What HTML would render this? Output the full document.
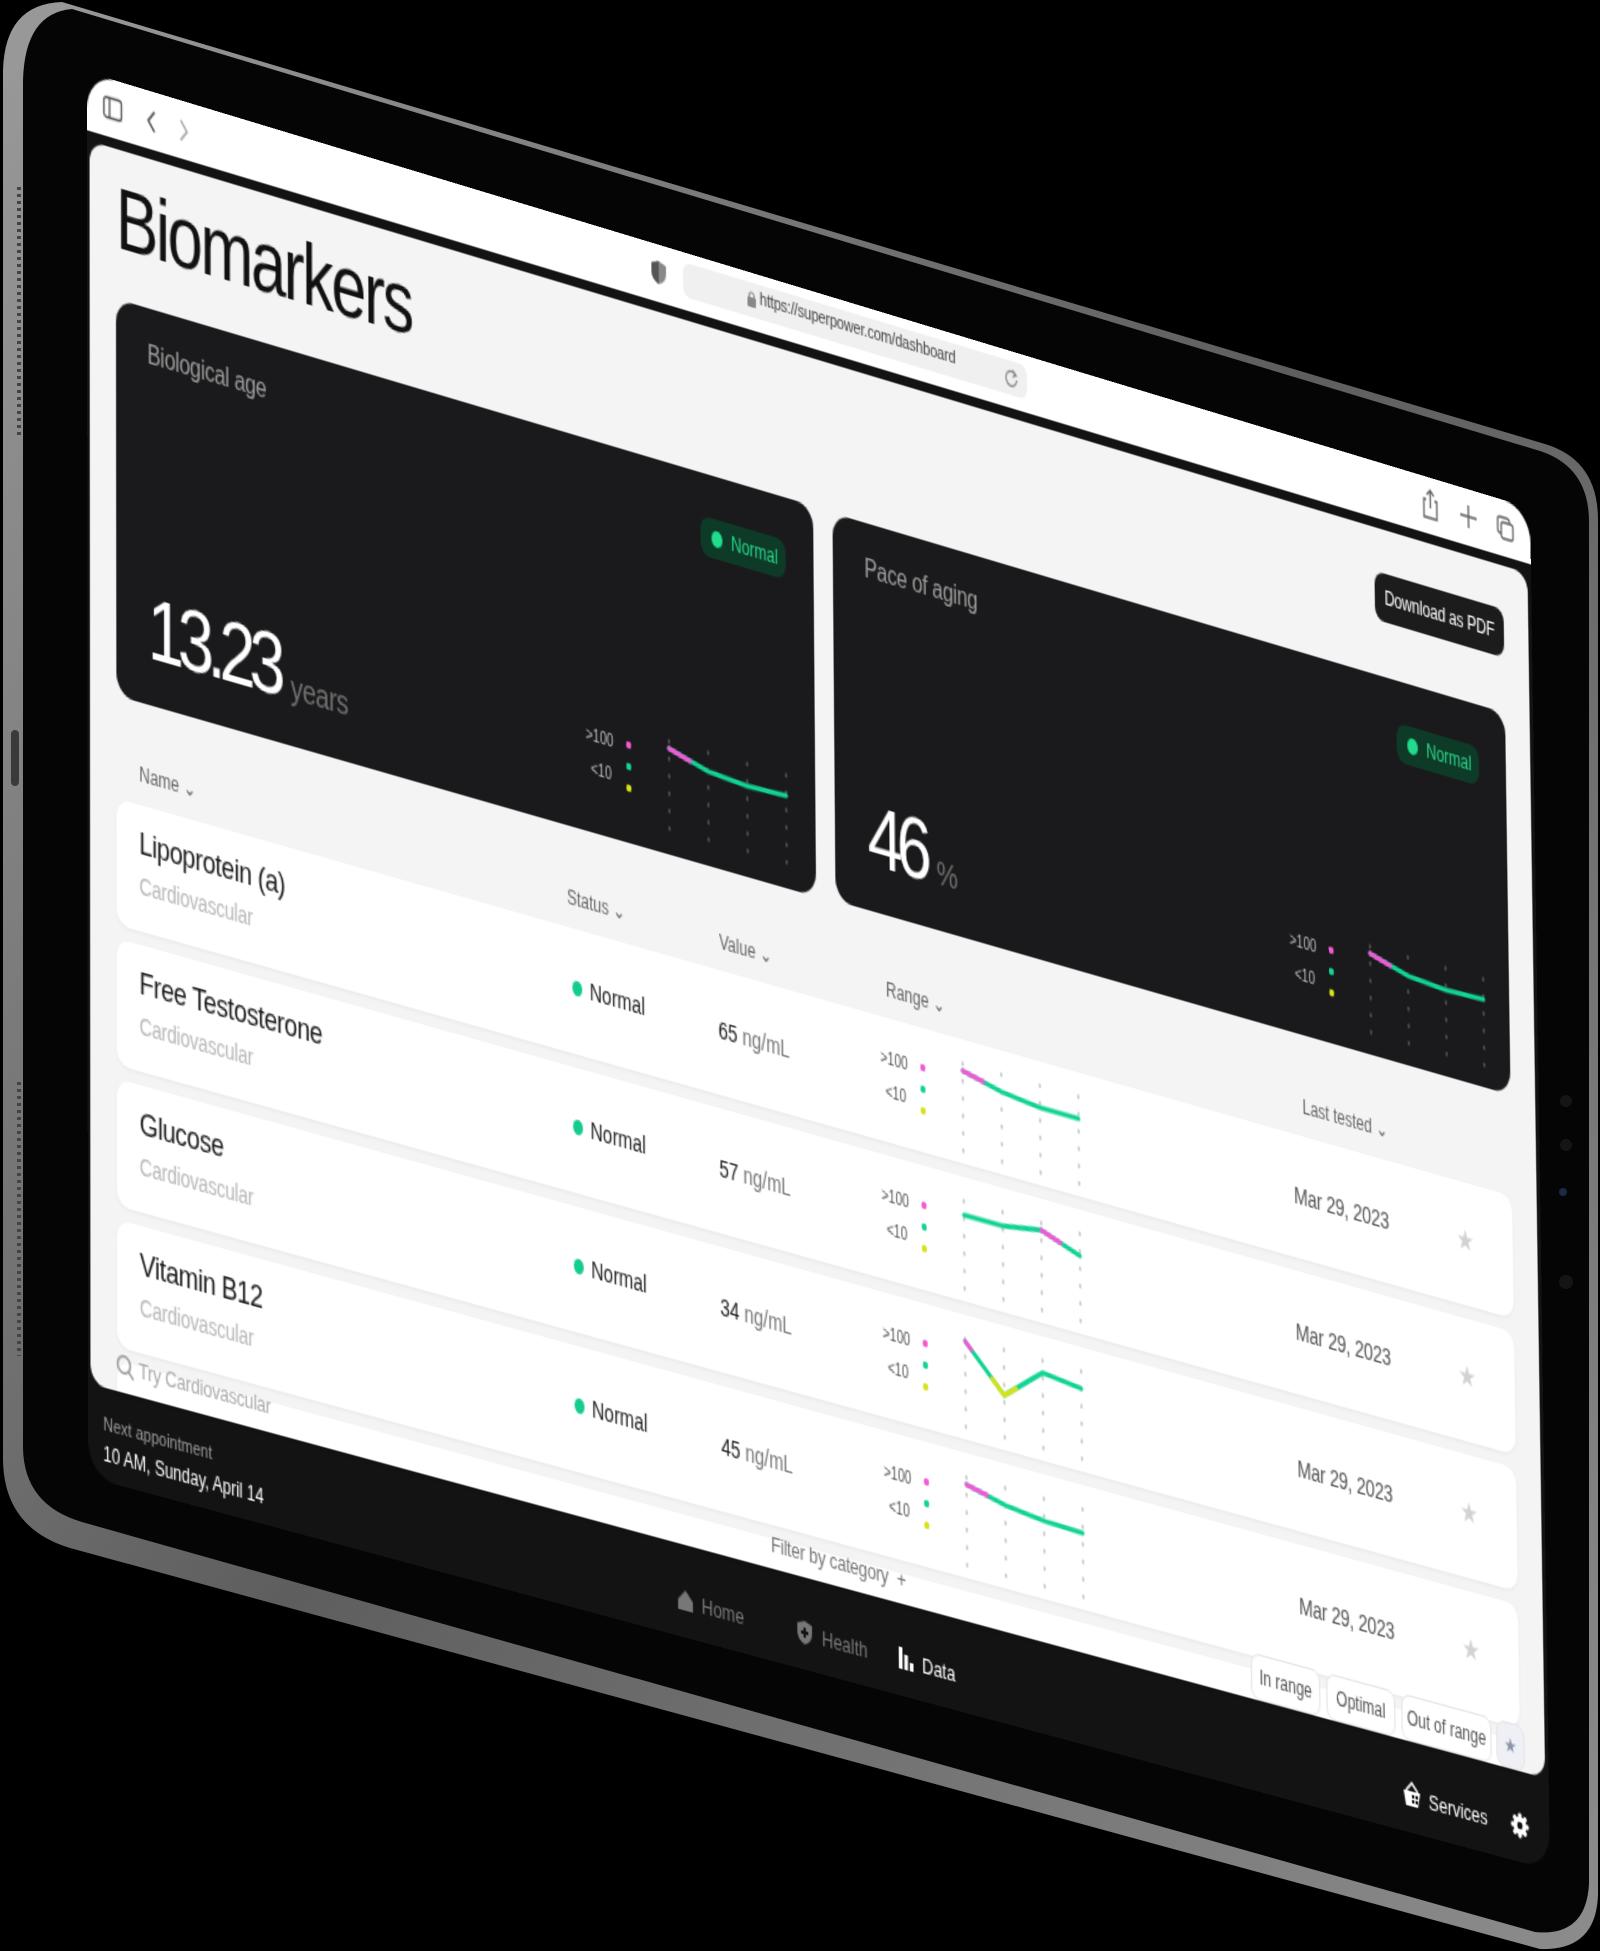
<!DOCTYPE html>
<html><head><meta charset="utf-8">
<style>
html,body{margin:0;padding:0;background:#000;width:1600px;height:1951px;overflow:hidden;font-family:"Liberation Sans",Arial,sans-serif}
#scr{position:absolute;left:0;top:0;width:1194px;height:834px;transform-origin:0 0;
transform:matrix3d(1.25399,0.380243,0,0.0000296993,-0.000223,1.66078,0,-0.0000161643,0,0,1,0,87,72,0,1);
border-radius:22px;background:#131313;overflow:hidden}
.a{position:absolute;white-space:nowrap}
.card{position:absolute;background:#1a1a1c;border-radius:14px}
.lbl{position:absolute;font-size:16px;color:#9c9c9c;letter-spacing:-0.3px}
.big{position:absolute;font-size:52px;line-height:52px;color:#fff;letter-spacing:-5px}
.big span{font-size:20px;color:#707070;letter-spacing:-0.5px;margin-left:9px}
.badge{position:absolute;width:70px;height:24px;border-radius:8px;background:#0d3b28;color:#2ad68a;font-size:12px;line-height:24px}
.badge i{position:absolute;left:9px;top:7px;width:9px;height:10px;border-radius:50%;background:#22dc8e}
.badge b{position:absolute;left:25px;font-weight:normal}
.row{position:absolute;left:23px;width:1147px;height:75px;background:#fff;border-radius:10px;box-shadow:0 1px 3px rgba(0,0,0,0.05)}
.nm{font-size:19px;color:#1a1a1a;letter-spacing:-0.4px}
.sub{font-size:14px;color:#b8b8b8;letter-spacing:-0.2px}
.st{font-size:14px;color:#222}
.dot{position:absolute;width:8px;height:9px;border-radius:50%;background:#14cc8c}
.val{font-size:14px;color:#222}
.val span{color:#777}
.dt{font-size:14px;color:#555;letter-spacing:-0.2px}
.star{font-size:17px;color:#d2d2d2}
.hd{font-size:12px;color:#666}
.chip{position:absolute;top:751px;height:26px;line-height:26px;background:#fff;border:1px solid #e5e5e5;border-radius:7px;font-size:12px;color:#555;text-align:center}
.nav{font-size:13px;color:#777}
</style></head><body>

<svg width="1600" height="1951" style="position:absolute;left:0;top:0">
<defs><linearGradient id="sil" x1="0" y1="0" x2="1" y2="1">
<stop offset="0" stop-color="#9a9a9a"/><stop offset="0.5" stop-color="#5e5e5e"/><stop offset="1" stop-color="#8c8c8c"/></linearGradient></defs>
<path d="M62,2 L1545,444 Q1598,460 1598,520 L1598,1895 Q1596,1951 1540,1949 L70,1548 Q4,1528 3,1460 L3,70 Q5,4 62,2 Z" fill="url(#sil)"/>
<path d="M72,9 L1540,451 Q1589,467 1589,522 L1589,1884 Q1586,1937 1535,1932 L82,1522 Q24,1505 23,1448 L23,80 Q25,13 72,9 Z" fill="#050505"/>
<line x1="19" y1="187" x2="19" y2="435" stroke="#444" stroke-width="4" stroke-dasharray="3 4"/>
<line x1="19" y1="1082" x2="19" y2="1356" stroke="#444" stroke-width="4" stroke-dasharray="3 4"/>
<rect x="11" y="730" width="8" height="56" rx="4" fill="#3a3a3a"/>
<circle cx="1566" cy="1101" r="6" fill="#151515"/><circle cx="1566" cy="1145" r="6" fill="#151515"/>
<circle cx="1563" cy="1192" r="4" fill="#1c2a48"/><circle cx="1566" cy="1282" r="7" fill="#151515"/>
</svg>

<div id="scr">
 <div class="a" style="left:0;top:0;width:1194px;height:35px;background:#fff"></div>
 <svg class="a" style="left:12px;top:9px" width="80" height="18">
  <rect x="1.5" y="2.5" width="14" height="12" rx="2" fill="none" stroke="#555" stroke-width="1.3"/>
  <line x1="6" y1="3" x2="6" y2="14" stroke="#555" stroke-width="1.3"/>
  <path d="M42,3 L37,9 L42,15" fill="none" stroke="#555" stroke-width="1.5"/>
  <path d="M63,3 L68,9 L63,15" fill="none" stroke="#aaa" stroke-width="1.5"/>
 </svg>
 <svg class="a" style="left:456px;top:9px" width="14" height="16"><path d="M7,1 L13,3 L13,8 Q13,13 7,15 Q1,13 1,8 L1,3 Z" fill="#888"/><path d="M7,1 L7,15 Q1,13 1,8 L1,3 Z" fill="#555"/></svg>
 <div class="a" style="left:483px;top:6px;width:285px;height:21px;background:#f0f0f0;border-radius:6px"></div>
 <svg class="a" style="left:535px;top:10px" width="9" height="12"><rect x="1" y="5" width="7" height="6" rx="1" fill="#888"/><path d="M2.5,5 V3.5 Q4.5,0.5 6.5,3.5 V5" fill="none" stroke="#888" stroke-width="1.2"/></svg>
 <div class="a" style="left:546px;top:9px;font-size:11px;color:#444;letter-spacing:-0.2px">https://superpower.com/dashboard</div>
 <svg class="a" style="left:749px;top:10px" width="12" height="12"><path d="M9.5,4 A4.5,4.5 0 1 0 10.5,7" fill="none" stroke="#888" stroke-width="1.2"/><path d="M7,1.5 L10,4 L7,5.5" fill="none" stroke="#888" stroke-width="1.2"/></svg>
 <svg class="a" style="left:1100px;top:6px" width="84" height="22">
  <path d="M5,8 H3 V19 H14 V8 H12" fill="none" stroke="#666" stroke-width="1.3"/><path d="M8.5,13 V2 M5.5,5 L8.5,2 L11.5,5" fill="none" stroke="#666" stroke-width="1.3"/>
  <path d="M41,4 V18 M34,11 H48" stroke="#666" stroke-width="1.4"/>
  <rect x="66" y="5" width="10" height="10" rx="2" fill="none" stroke="#666" stroke-width="1.3"/><rect x="69" y="8" width="10" height="10" rx="2" fill="#fff" stroke="#666" stroke-width="1.3"/>
 </svg>

 <div class="a" style="left:2px;top:41px;width:1189px;height:738px;background:#f4f4f4;border-radius:12px"></div>
 <div class="a" style="left:23px;top:57px;font-size:51px;line-height:51px;letter-spacing:-2px;color:#111">Biomarkers</div>
 <div class="a" style="left:1060px;top:68px;width:110px;height:30px;border-radius:8px;background:#1c1c1c;color:#fff;font-size:12px;line-height:30px;text-align:center;letter-spacing:-0.2px">Download as PDF</div>

 <div class="card" style="left:23px;top:131px;width:566px;height:237px">
  <div class="lbl" style="left:25px;top:20px">Biological age</div>
  <div class="badge" style="left:473px;top:26px"><i></i><b>Normal</b></div>
  <div class="big" style="left:25px;top:166px">13.23<span>years</span></div>
  <svg class="a" style="left:377px;top:164px" width="170" height="60">
   <text x="1" y="18" font-size="10" fill="#bbb" font-family="Liberation Sans">&gt;100</text><text x="5" y="38" font-size="10" fill="#bbb" font-family="Liberation Sans">&lt;10</text>
   <circle cx="36" cy="14" r="2.2" fill="#f25ad2"/><circle cx="36" cy="27" r="2.2" fill="#14d392"/><circle cx="36" cy="40" r="2.2" fill="#d6e21a"/>
   <g stroke="#555" stroke-width="1.6" stroke-dasharray="1.5 9" stroke-linecap="round"><line x1="69" y1="4" x2="69" y2="58"/><line x1="101" y1="4" x2="101" y2="58"/><line x1="133" y1="4" x2="133" y2="58"/><line x1="165" y1="4" x2="165" y2="58"/></g>
   <polyline points="69,9 101,16 133,18 165,17" fill="none" stroke="#12d394" stroke-width="3" stroke-linecap="round" stroke-linejoin="round"/>
   <line x1="69" y1="9" x2="86" y2="13" stroke="#ef5bd6" stroke-width="3" stroke-linecap="round"/>
  </svg>
 </div>
 <div class="card" style="left:605px;top:132px;width:565px;height:235px">
  <div class="lbl" style="left:26px;top:20px">Pace of aging</div>
  <div class="badge" style="left:472px;top:26px"><i></i><b>Normal</b></div>
  <div class="big" style="left:27px;top:164px">46<span>%</span></div>
  <svg class="a" style="left:378px;top:164px" width="170" height="60">
   <text x="1" y="18" font-size="10" fill="#bbb" font-family="Liberation Sans">&gt;100</text><text x="5" y="38" font-size="10" fill="#bbb" font-family="Liberation Sans">&lt;10</text>
   <circle cx="36" cy="14" r="2.2" fill="#f25ad2"/><circle cx="36" cy="27" r="2.2" fill="#14d392"/><circle cx="36" cy="40" r="2.2" fill="#d6e21a"/>
   <g stroke="#555" stroke-width="1.6" stroke-dasharray="1.5 9" stroke-linecap="round"><line x1="69" y1="4" x2="69" y2="58"/><line x1="101" y1="4" x2="101" y2="58"/><line x1="133" y1="4" x2="133" y2="58"/><line x1="165" y1="4" x2="165" y2="58"/></g>
   <polyline points="69,9 101,16 133,18 165,17" fill="none" stroke="#12d394" stroke-width="3" stroke-linecap="round" stroke-linejoin="round"/>
   <line x1="69" y1="9" x2="86" y2="13" stroke="#ef5bd6" stroke-width="3" stroke-linecap="round"/>
  </svg>
 </div>

 <div class="a hd" style="left:41px;top:404px">Name ⌄</div>
 <div class="a hd" style="left:385px;top:404px">Status ⌄</div>
 <div class="a hd" style="left:509px;top:405px">Value ⌄</div>
 <div class="a hd" style="left:646px;top:405px">Range ⌄</div>
 <div class="a hd" style="left:993px;top:404px">Last tested ⌄</div>

 <div class="row" style="top:429px"></div>
 <div class="row" style="top:512px"></div>
 <div class="row" style="top:595px"></div>
 <div class="row" style="top:678px"></div>
 <div class="row" style="top:761px;height:18px;border-radius:10px 10px 0 0"></div>

 <div class="a nm" style="left:41px;top:442px">Lipoprotein (a)</div><div class="a sub" style="left:41px;top:469px">Cardiovascular</div>
 <div class="a nm" style="left:41px;top:525px">Free Testosterone</div><div class="a sub" style="left:41px;top:552px">Cardiovascular</div>
 <div class="a nm" style="left:41px;top:608px">Glucose</div><div class="a sub" style="left:41px;top:635px">Cardiovascular</div>
 <div class="a nm" style="left:41px;top:691px">Vitamin B12</div><div class="a sub" style="left:41px;top:718px">Cardiovascular</div>

 <div class="dot" style="left:389px;top:460px"></div><div class="a st" style="left:403px;top:456px">Normal</div>
 <div class="dot" style="left:389px;top:543px"></div><div class="a st" style="left:403px;top:539px">Normal</div>
 <div class="dot" style="left:389px;top:626px"></div><div class="a st" style="left:403px;top:622px">Normal</div>
 <div class="dot" style="left:389px;top:709px"></div><div class="a st" style="left:403px;top:705px">Normal</div>

 <div class="a val" style="left:508px;top:457px">65 <span>ng/mL</span></div>
 <div class="a val" style="left:508px;top:540px">57 <span>ng/mL</span></div>
 <div class="a val" style="left:508px;top:623px">34 <span>ng/mL</span></div>
 <div class="a val" style="left:508px;top:706px">45 <span>ng/mL</span></div>

 <svg class="a" style="left:640px;top:439px" width="170" height="60">
  <text x="1" y="18" font-size="10" fill="#555" font-family="Liberation Sans">&gt;100</text><text x="5" y="38" font-size="10" fill="#555" font-family="Liberation Sans">&lt;10</text>
  <circle cx="36" cy="14" r="2.2" fill="#f25ad2"/><circle cx="36" cy="27" r="2.2" fill="#14d392"/><circle cx="36" cy="40" r="2.2" fill="#d6e21a"/>
  <g stroke="#c4c4c4" stroke-width="1.6" stroke-dasharray="1.5 9" stroke-linecap="round"><line x1="69" y1="4" x2="69" y2="58"/><line x1="101" y1="4" x2="101" y2="58"/><line x1="133" y1="4" x2="133" y2="58"/><line x1="165" y1="4" x2="165" y2="58"/></g>
  <polyline points="69,9 101,15 133,18 165,18" fill="none" stroke="#12d394" stroke-width="3" stroke-linecap="round" stroke-linejoin="round"/>
  <line x1="69" y1="9" x2="86" y2="12" stroke="#ef5bd6" stroke-width="3" stroke-linecap="round"/>
 </svg>
 <svg class="a" style="left:640px;top:522px" width="170" height="60">
  <text x="1" y="18" font-size="10" fill="#555" font-family="Liberation Sans">&gt;100</text><text x="5" y="38" font-size="10" fill="#555" font-family="Liberation Sans">&lt;10</text>
  <circle cx="36" cy="14" r="2.2" fill="#f25ad2"/><circle cx="36" cy="27" r="2.2" fill="#14d392"/><circle cx="36" cy="40" r="2.2" fill="#d6e21a"/>
  <g stroke="#c4c4c4" stroke-width="1.6" stroke-dasharray="1.5 9" stroke-linecap="round"><line x1="69" y1="4" x2="69" y2="58"/><line x1="101" y1="4" x2="101" y2="58"/><line x1="133" y1="4" x2="133" y2="58"/><line x1="165" y1="4" x2="165" y2="58"/></g>
  <polyline points="69,13 101,13 133,9 165,18" fill="none" stroke="#12d394" stroke-width="3" stroke-linecap="round" stroke-linejoin="round"/>
  <line x1="133" y1="9" x2="149" y2="13.5" stroke="#ef5bd6" stroke-width="3" stroke-linecap="round"/>
 </svg>
 <svg class="a" style="left:640px;top:605px" width="170" height="60">
  <text x="1" y="18" font-size="10" fill="#555" font-family="Liberation Sans">&gt;100</text><text x="5" y="38" font-size="10" fill="#555" font-family="Liberation Sans">&lt;10</text>
  <circle cx="36" cy="14" r="2.2" fill="#f25ad2"/><circle cx="36" cy="27" r="2.2" fill="#14d392"/><circle cx="36" cy="40" r="2.2" fill="#d6e21a"/>
  <g stroke="#c4c4c4" stroke-width="1.6" stroke-dasharray="1.5 9" stroke-linecap="round"><line x1="69" y1="4" x2="69" y2="58"/><line x1="101" y1="4" x2="101" y2="58"/><line x1="133" y1="4" x2="133" y2="58"/><line x1="165" y1="4" x2="165" y2="58"/></g>
  <polyline points="69,6 101,32 133,12 165,15" fill="none" stroke="#12d394" stroke-width="3" stroke-linecap="round" stroke-linejoin="round"/>
  <polyline points="91,24 101,32 111,26" fill="none" stroke="#d6e21a" stroke-width="3" stroke-linecap="round" stroke-linejoin="round"/>
  <line x1="69" y1="6" x2="74" y2="10" stroke="#ef5bd6" stroke-width="3" stroke-linecap="round"/>
 </svg>
 <svg class="a" style="left:640px;top:688px" width="170" height="60">
  <text x="1" y="18" font-size="10" fill="#555" font-family="Liberation Sans">&gt;100</text><text x="5" y="38" font-size="10" fill="#555" font-family="Liberation Sans">&lt;10</text>
  <circle cx="36" cy="14" r="2.2" fill="#f25ad2"/><circle cx="36" cy="27" r="2.2" fill="#14d392"/><circle cx="36" cy="40" r="2.2" fill="#d6e21a"/>
  <g stroke="#c4c4c4" stroke-width="1.6" stroke-dasharray="1.5 9" stroke-linecap="round"><line x1="69" y1="4" x2="69" y2="58"/><line x1="101" y1="4" x2="101" y2="58"/><line x1="133" y1="4" x2="133" y2="58"/><line x1="165" y1="4" x2="165" y2="58"/></g>
  <polyline points="69,9 101,15 133,18 165,19" fill="none" stroke="#12d394" stroke-width="3" stroke-linecap="round" stroke-linejoin="round"/>
  <line x1="69" y1="9" x2="86" y2="12" stroke="#ef5bd6" stroke-width="3" stroke-linecap="round"/>
 </svg>

 <div class="a dt" style="left:985px;top:458px">Mar 29, 2023</div>
 <div class="a dt" style="left:985px;top:541px">Mar 29, 2023</div>
 <div class="a dt" style="left:985px;top:624px">Mar 29, 2023</div>
 <div class="a dt" style="left:985px;top:707px">Mar 29, 2023</div>
 <div class="a star" style="left:1122px;top:455px">★</div>
 <div class="a star" style="left:1122px;top:538px">★</div>
 <div class="a star" style="left:1122px;top:621px">★</div>
 <div class="a star" style="left:1122px;top:704px">★</div>

 <svg class="a" style="left:22px;top:756px" width="16" height="16"><circle cx="6.5" cy="6.5" r="5" fill="none" stroke="#999" stroke-width="1.5"/><line x1="10" y1="10" x2="14" y2="14" stroke="#999" stroke-width="1.5"/></svg>
 <div class="a" style="left:40px;top:756px;font-size:13px;color:#aaa;letter-spacing:-0.2px">Try Cardiovascular</div>
 <div class="a" style="left:548px;top:757px;font-size:13px;color:#777;letter-spacing:-0.2px">Filter by category &nbsp;+</div>
 <div class="chip" style="left:944px;width:56px">In range</div>
 <div class="chip" style="left:1007px;width:56px">Optimal</div>
 <div class="chip" style="left:1070px;width:74px">Out of range</div>
 <div class="chip" style="left:1150px;width:22px;background:#eef0f5;color:#8a93a8">★</div>

 <div class="a" style="left:12px;top:795px;font-size:11px;color:#9a9a9a">Next appointment</div>
 <div class="a" style="left:12px;top:811px;font-size:12px;color:#fff">10 AM, Sunday, April 14</div>

 <svg class="a" style="left:471px;top:805px" width="14" height="14"><path d="M1,7 L7,1 L13,7 V13 H1 Z" fill="#777"/></svg>
 <div class="a nav" style="left:491px;top:805px">Home</div>
 <svg class="a" style="left:568px;top:804px" width="14" height="16"><path d="M7,1 L13,3 L13,8 Q13,13 7,15 Q1,13 1,8 L1,3 Z" fill="#777"/><path d="M7,5 V11 M4,8 H10" stroke="#131313" stroke-width="2"/></svg>
 <div class="a nav" style="left:589px;top:805px">Health</div>
 <svg class="a" style="left:651px;top:804px" width="13" height="14"><rect x="1" y="1" width="3" height="13" fill="#fff"/><rect x="5.5" y="5" width="3" height="9" fill="#fff"/><rect x="10" y="9" width="3" height="5" fill="#fff"/></svg>
 <div class="a nav" style="left:671px;top:805px;color:#fff">Data</div>

 <svg class="a" style="left:1070px;top:803px" width="16" height="16"><path d="M3,6 L8,1 L13,6" fill="none" stroke="#fff" stroke-width="1.5"/><path d="M1,6 H15 L13,15 H3 Z" fill="#fff"/><rect x="8" y="8" width="2" height="2" fill="#131313"/><rect x="11" y="8" width="2" height="2" fill="#131313"/><rect x="8" y="11" width="2" height="2" fill="#131313"/><rect x="11" y="11" width="2" height="2" fill="#131313"/></svg>
 <div class="a" style="left:1092px;top:805px;font-size:13px;color:#fff">Services</div>
 <svg class="a" style="left:1161px;top:804px" width="16" height="16"><g fill="#fff"><circle cx="8" cy="8" r="5.5"/><rect x="6.5" y="0.5" width="3" height="15" rx="1"/><rect x="0.5" y="6.5" width="15" height="3" rx="1"/><rect x="6.5" y="0.5" width="3" height="15" rx="1" transform="rotate(45 8 8)"/><rect x="6.5" y="0.5" width="3" height="15" rx="1" transform="rotate(-45 8 8)"/></g><circle cx="8" cy="8" r="2.3" fill="#131313"/></svg>
</div>
</body></html>
